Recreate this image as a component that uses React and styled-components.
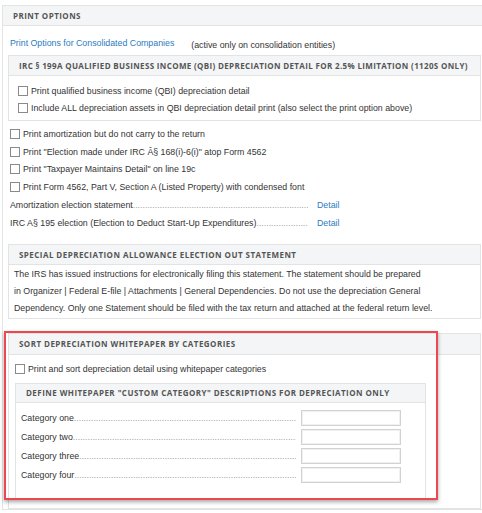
import React from 'react'
import styled, { createGlobalStyle } from 'styled-components'

const GlobalStyle = createGlobalStyle`
    html, body {
        margin: 0;
        padding: 0;
        background: #ffffff;
        overflow: hidden;
    }
    body {
        font-family: "Liberation Sans", Arial, sans-serif;
        font-size: 8.8px;
        color: #333333;
    }
`

const Page = styled.div`
    padding: 5px 0 0 2px;
    width: 500px;
`

const Panel = styled.section`
    border: 1px solid #e3e3e3;
    background: #ffffff;
    width: ${p => p.width || 'auto'};
    margin: ${p => p.margin || '0'};
    box-sizing: border-box;
`

const PanelHeader = styled.div`
    height: ${p => p.h || 19}px;
    display: flex;
    align-items: center;
    padding-left: ${p => p.pad || 10}px;
    background: #f4f5f6;
    border-bottom: 1px solid #e3e3e3;
    font-family: "Open Sans", sans-serif;
    font-weight: 700;
    font-size: 8px;
    letter-spacing: ${p => p.spacing || 0.45}px;
    text-transform: uppercase;
    color: #555555;
    white-space: nowrap;
`

const PanelBody = styled.div`
    padding: ${p => p.pad || '0'};
`

const LinkRow = styled.div`
    display: flex;
    align-items: baseline;
    gap: 17px;
    padding: 12px 0 7px 2px;
`

const Link = styled.a`
    color: #2b7bbf;
    text-decoration: none;
    cursor: pointer;
    margin-left: ${p => p.gap || 0}px;
`

const Note = styled.span`
    position: relative;
    top: 2px;
`

const CheckRow = styled.label`
    display: flex;
    align-items: center;
    gap: 3px;
    height: ${p => p.h || 17.6}px;
    white-space: nowrap;
`

const Box = styled.span`
    width: 8px;
    height: 8px;
    border: 1px solid #8a8a8a;
    background: #ffffff;
    flex: none;
`

const LeaderRow = styled.div`
    display: flex;
    align-items: baseline;
    height: 18.5px;
    line-height: 18.5px;
`

const LeaderLabel = styled.div`
    width: ${p => p.w}px;
    display: flex;
    overflow: hidden;
    white-space: nowrap;
    flex: none;
`

const Dots = styled.span`
    flex: 1;
    overflow: hidden;
    color: #a0a0a0;
    &::after {
        content: '..............................................................................................................................................................................................................';
    }
`

const Paragraph = styled.p`
    margin: 0;
    line-height: 17px;
`

const CategoryList = styled.div`
    display: flex;
    flex-direction: column;
    gap: 3px;
    padding: 7px 0 15px 5px;
`

const CategoryRow = styled.div`
    display: flex;
    align-items: center;
    height: 16px;
`

const TextInput = styled.input`
    width: 100px;
    height: 16px;
    box-sizing: border-box;
    border: 1px solid #d2d2d2;
    box-shadow: inset 0 0 0 1px #f1f1f1;
    margin: 0 0 0 5px;
    padding: 0 4px;
    font: inherit;
    outline: none;
`

const SortWrap = styled.div`
    position: relative;
    margin-top: 14px;
`

const Highlight = styled.div`
    position: absolute;
    left: -4px;
    top: -2px;
    width: 430px;
    height: 165px;
    border: 2px solid #ea4a4f;
    box-shadow: 0 2px 4px rgba(0, 0, 0, 0.35);
    pointer-events: none;
`

const Check = ({ children, h }) => (
    <CheckRow h={h}>
        <Box />
        <span>{children}</span>
    </CheckRow>
)

const categories = ['Category one', 'Category two', 'Category three', 'Category four']

export default function App() {
    return (
        <Page>
            <GlobalStyle />
            <Panel width="486px">
                <PanelHeader>Print Options</PanelHeader>
                <PanelBody pad="0 0 0 5px">
                    <LinkRow>
                        <Link>Print Options for Consolidated Companies</Link>
                        <Note>(active only on consolidation entities)</Note>
                    </LinkRow>

                    <Panel width="473px">
                        <PanelHeader spacing={0.35}>IRC § 199A Qualified Business Income (QBI) Depreciation Detail for 2.5% Limitation (1120S Only)</PanelHeader>
                        <PanelBody pad="6px 0 3px 9px">
                            <Check>Print qualified business income (QBI) depreciation detail</Check>
                            <Check>Include ALL depreciation assets in QBI depreciation detail print (also select the print option above)</Check>
                        </PanelBody>
                    </Panel>

                    <PanelBody pad="4px 0 0 2px">
                        <Check>Print amortization but do not carry to the return</Check>
                        <Check>Print "Election made under IRC Â§ 168(i)-6(i)" atop Form 4562</Check>
                        <Check>Print "Taxpayer Maintains Detail" on line 19c</Check>
                        <Check>Print Form 4562, Part V, Section A (Listed Property) with condensed font</Check>
                        <LeaderRow>
                            <LeaderLabel w={298}>Amortization election statement<Dots /></LeaderLabel>
                            <Link gap={9}>Detail</Link>
                        </LeaderRow>
                        <LeaderRow>
                            <LeaderLabel w={298}>IRC A§ 195 election (Election to Deduct Start-Up Expenditures)<Dots /></LeaderLabel>
                            <Link gap={9}>Detail</Link>
                        </LeaderRow>
                    </PanelBody>

                    <Panel width="473px" margin="11px 0 0 0">
                        <PanelHeader>Special Depreciation Allowance Election Out Statement</PanelHeader>
                        <PanelBody pad="1px 10px 1px 5px">
                            <Paragraph>
                                The IRS has issued instructions for electronically filing this statement. The statement should be prepared<br />
                                in Organizer | Federal E-file | Attachments | General Dependencies. Do not use the depreciation General<br />
                                Dependency. Only one Statement should be filed with the tax return and attached at the federal return level.
                            </Paragraph>
                        </PanelBody>
                    </Panel>

                    <SortWrap>
                        <Panel width="473px">
                            <PanelHeader h={20}>Sort Depreciation Whitepaper by Categories</PanelHeader>
                            <PanelBody pad="5px 0 9px 6px">
                                <Check h={18}>Print and sort depreciation detail using whitepaper categories</Check>
                                <Panel width="411px" margin="5px 0 0 0">
                                    <PanelHeader h={18}>Define Whitepaper "Custom Category" Descriptions for Depreciation Only</PanelHeader>
                                    <CategoryList>
                                        {categories.map(c => (
                                            <CategoryRow key={c}>
                                                <LeaderLabel w={275}>{c}<Dots /></LeaderLabel>
                                                <TextInput />
                                            </CategoryRow>
                                        ))}
                                    </CategoryList>
                                </Panel>
                            </PanelBody>
                        </Panel>
                        <Highlight />
                    </SortWrap>
                </PanelBody>
            </Panel>
        </Page>
    )
}
